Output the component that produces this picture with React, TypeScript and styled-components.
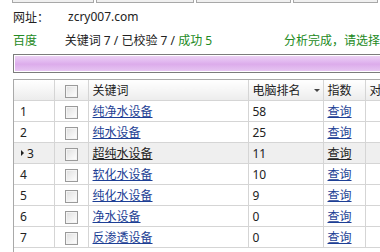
import React from "react";
import styled, { createGlobalStyle } from "styled-components";

const GlobalStyle = createGlobalStyle`
    html, body {
        margin: 0;
        padding: 0;
        background: #ffffff;
        width: 380px;
        height: 252px;
        overflow: hidden;
    }
    body {
        font-family: "Noto Sans", "Noto Sans CJK SC", sans-serif;
        font-size: 12px;
        color: #222;
    }
`;

const rows = [
    { no: 1, keyword: "纯净水设备", rank: "58" },
    { no: 2, keyword: "纯水设备", rank: "25" },
    { no: 3, keyword: "超纯水设备", rank: "11", selected: true },
    { no: 4, keyword: "软化水设备", rank: "10" },
    { no: 5, keyword: "纯化水设备", rank: "9" },
    { no: 6, keyword: "净水设备", rank: "0" },
    { no: 7, keyword: "反渗透设备", rank: "0" },
];

const App = () => {
    return (
        <Page>
            <GlobalStyle />
            <TopStrip>
                <StripBox $w={87} />
                <StripBox $w={104} />
                <StripBox $w={100} />
                <StripBox $w={90} />
            </TopStrip>
            <InfoRow $top={5}>
                <Label>网址：</Label>
                <Value>zcry007.com</Value>
            </InfoRow>
            <InfoRow $top={6}>
                <Label $green>百度</Label>
                <Value>
                    关键词 7 / 已校验 7 / <Green>成功 5</Green>
                </Value>
                <Status>分析完成，请选择</Status>
            </InfoRow>
            <Progress>
                <ProgressFill />
            </Progress>
            <Grid>
                <Table>
                    <colgroup>
                        <col style={{ width: 40 }} />
                        <col style={{ width: 34 }} />
                        <col style={{ width: 160 }} />
                        <col style={{ width: 75 }} />
                        <col style={{ width: 42 }} />
                        <col style={{ width: 60 }} />
                    </colgroup>
                    <thead>
                        <tr>
                            <Th />
                            <Th $center>
                                <Check />
                            </Th>
                            <Th>关键词</Th>
                            <Th>
                                <SortHead>
                                    电脑排名
                                    <SortArrow />
                                </SortHead>
                            </Th>
                            <Th>指数</Th>
                            <Th>对手</Th>
                        </tr>
                    </thead>
                    <tbody>
                        {rows.map(r => (
                            <Tr key={r.no} $selected={r.selected}>
                                <Td $num>
                                    {r.selected && <RowArrow />}
                                    {r.no}
                                </Td>
                                <Td $center>
                                    <Check />
                                </Td>
                                <Td>
                                    <Link $dark={r.selected}>{r.keyword}</Link>
                                </Td>
                                <Td>{r.rank}</Td>
                                <Td>
                                    <Link $dark={r.selected}>查询</Link>
                                </Td>
                                <Td />
                            </Tr>
                        ))}
                    </tbody>
                </Table>
            </Grid>
        </Page>
    );
};

export default App;

const Page = styled.div`
    width: 380px;
    height: 252px;
    overflow: hidden;
    display: flex;
    flex-direction: column;
`;

const TopStrip = styled.div`
    display: flex;
    height: 3px;
    padding-left: 12px;
`;

const StripBox = styled.div<{ $w: number }>`
    width: ${p => p.$w}px;
    height: 2px;
    border: 1px solid #a8a8a8;
    border-top: none;
    background: #f0f0f0;
    margin-right: 2px;
`;

const InfoRow = styled.div<{ $top: number }>`
    display: flex;
    align-items: center;
    height: 17px;
    margin-top: ${p => p.$top}px;
    padding-left: 13px;
    white-space: nowrap;
    font-size: 12px;
`;

const Label = styled.span<{ $green?: boolean }>`
    width: 55px;
    color: ${p => (p.$green ? "#238a23" : "#222")};
`;

const Value = styled.span`
    width: 233px;
    color: #222;
`;

const Green = styled.span`
    color: #238a23;
`;

const Status = styled.span`
    color: #238a23;
`;

const Progress = styled.div`
    margin: 6px 0 0 13px;
    height: 15px;
    border: 1px solid #7c7c7c;
    border-right: none;
    background: #ffffff;
    padding: 1px 0 1px 1px;
`;

const ProgressFill = styled.div`
    height: 100%;
    background: linear-gradient(
        to bottom,
        #ecd2f4 0%,
        #e2b9f0 35%,
        #dcaceb 55%,
        #e6c5f2 100%
    );
`;

const Grid = styled.div`
    margin: 6px 0 0 13px;
    flex: 1;
    border-left: 1px solid #a9a9a9;
    border-top: 1px solid #a9a9a9;
`;

const Table = styled.table`
    border-collapse: collapse;
    table-layout: fixed;
    width: 411px;
`;

const Th = styled.th<{ $center?: boolean }>`
    height: 20px;
    padding: 0 0 0 4px;
    text-align: ${p => (p.$center ? "center" : "left")};
    font-weight: normal;
    font-size: 12px;
    color: #222;
    background: linear-gradient(to bottom, #ffffff 0%, #f4f4f4 60%, #ececec 100%);
    border-right: 1px solid #d5d5d5;
    border-bottom: 1px solid #d5d5d5;
    white-space: nowrap;
    overflow: hidden;
    ${p => p.$center && "padding: 0;"}
`;

const SortHead = styled.span`
    display: flex;
    align-items: center;
`;

const SortArrow = styled.span`
    margin-left: 13px;
    width: 0;
    height: 0;
    border-left: 3px solid transparent;
    border-right: 3px solid transparent;
    border-top: 3px solid #444;
`;

const Tr = styled.tr<{ $selected?: boolean }>`
    background: ${p => (p.$selected ? "#efefef" : "#ffffff")};
`;

const Td = styled.td<{ $center?: boolean; $num?: boolean }>`
    height: 20px;
    padding: 0 0 0 ${p => (p.$num ? "6px" : "4px")};
    text-align: ${p => (p.$center ? "center" : "left")};
    border-right: 1px solid #d5d5d5;
    border-bottom: 1px solid #d5d5d5;
    white-space: nowrap;
    overflow: hidden;
    font-size: 12px;
    color: #222;
    ${p => p.$center && "padding: 0;"}
`;

const RowArrow = styled.span`
    display: inline-block;
    vertical-align: middle;
    margin: 0 3px 2px 1px;
    width: 0;
    height: 0;
    border-top: 3px solid transparent;
    border-bottom: 3px solid transparent;
    border-left: 3px solid #222;
`;

const Check = styled.span`
    display: inline-block;
    vertical-align: middle;
    width: 11px;
    height: 11px;
    border: 1px solid #9a9a9a;
    background: linear-gradient(135deg, #dedede 0%, #f6f6f6 70%, #ffffff 100%);
    box-shadow: inset 0 0 0 1px #f4f4f4;
`;

const Link = styled.span<{ $dark?: boolean }>`
    color: ${p => (p.$dark ? "#222" : "#1d3f95")};
    text-decoration: underline;
    cursor: pointer;
`;
